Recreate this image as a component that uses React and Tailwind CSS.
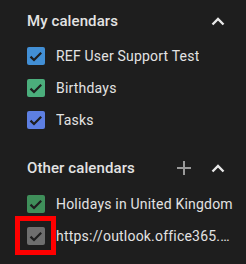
const my = [
  { name: 'REF User Support Test', color: 'bg-[#428fd5]' },
  { name: 'Birthdays', color: 'bg-[#4bae7c]' },
  { name: 'Tasks', color: 'bg-[#5d7fe2]' },
];

const other = [
  { name: 'Holidays in United Kingdom', color: 'bg-[#3f8f5a]' },
  { name: 'https://outlook.office365.com/owa/calendar/reference', color: 'bg-[#6e6e6e]', marked: true },
];

function Chevron() {
  return (
    <svg width="14" height="9" viewBox="0 0 14 9" fill="none">
      <polyline points="1.5,7.5 7,2 12.5,7.5" stroke="#e8e8e8" strokeWidth="2.4" />
    </svg>
  );
}

function Plus() {
  return (
    <svg width="14" height="14" viewBox="0 0 14 14" fill="none">
      <path d="M7 0v14M0 7h14" stroke="#9a9a9a" strokeWidth="2" />
    </svg>
  );
}

function Row({ name, color, marked }) {
  return (
    <div className="h-8 flex items-center pr-[12px]">
      <div className="relative shrink-0">
        <div className={`w-[18px] h-[18px] rounded-[2px] ${color} flex items-center justify-center`}>
          <svg width="18" height="18" viewBox="0 0 18 18" fill="none">
            <polyline points="3.5,9.6 7,13 14.2,5.8" stroke="#1e1e1e" strokeWidth="2.2" />
          </svg>
        </div>
        {marked && (
          <div className="absolute -left-[12px] -top-[11px] w-[41px] h-[39px] border-[5px] border-[#ff0000]" />
        )}
      </div>
      <span className="ml-[11px] text-[14px] tracking-[0.2px] text-[#e3e3e3] truncate">{name}</span>
    </div>
  );
}

export default function App() {
  return (
    <div
      className="w-[246px] h-[264px] bg-[#1e1e1e] pl-[27px] overflow-hidden"
      style={{ fontFamily: 'Roboto, "Liberation Sans", sans-serif' }}
    >
      <div className="h-10 pt-[2px] pr-4 flex items-center justify-between">
        <span className="text-[15px] font-medium tracking-[0.1px] text-[#e3e3e3]">My calendars</span>
        <div className="w-6 h-6 flex items-center justify-center">
          <Chevron />
        </div>
      </div>
      {my.map((c) => <Row key={c.name} {...c} />)}

      <div className="mt-3 h-10 pr-4 flex items-center justify-between">
        <span className="text-[15px] font-medium tracking-[0.1px] text-[#e3e3e3]">Other calendars</span>
        <div className="flex items-center gap-[10px]">
          <div className="w-6 h-6 flex items-center justify-center">
            <Plus />
          </div>
          <div className="w-6 h-6 flex items-center justify-center">
            <Chevron />
          </div>
        </div>
      </div>
      {other.map((c) => <Row key={c.name} {...c} />)}
    </div>
  );
}
